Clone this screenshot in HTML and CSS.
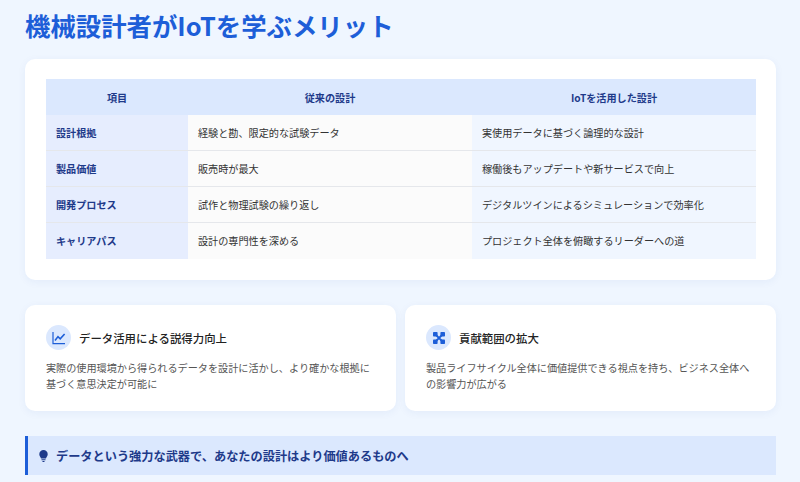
FILE: index.html
```html
<!DOCTYPE html>
<html lang="ja">
<head>
<meta charset="utf-8">
<title>機械設計者がIoTを学ぶメリット</title>
<link rel="stylesheet" href="styles.css">
</head>
<body>
<main class="page">
  <h1 class="title">機械設計者がIoTを学ぶメリット</h1>
  <section class="table-card">
    <table class="compare">
      <thead>
        <tr><th class="col-a">項目</th><th class="col-b">従来の設計</th><th class="col-c">IoTを活用した設計</th></tr>
      </thead>
      <tbody>
        <tr><th>設計根拠</th><td class="old">経験と勘、限定的な試験データ</td><td class="new">実使用データに基づく論理的な設計</td></tr>
        <tr><th>製品価値</th><td class="old">販売時が最大</td><td class="new">稼働後もアップデートや新サービスで向上</td></tr>
        <tr><th>開発プロセス</th><td class="old">試作と物理試験の繰り返し</td><td class="new">デジタルツインによるシミュレーションで効率化</td></tr>
        <tr><th>キャリアパス</th><td class="old">設計の専門性を深める</td><td class="new">プロジェクト全体を俯瞰するリーダーへの道</td></tr>
      </tbody>
    </table>
  </section>
  <section class="benefits">
    <article class="benefit">
      <header class="benefit-head">
        <span class="icon-circle">
          <svg class="icon" viewBox="0 0 14 14" width="14" height="14"><path d="M1 1V12.6H13" fill="none" stroke="currentColor" stroke-width="1.2"/><path d="M3 9.6L6 5.6 8.2 7.8 12.6 3" fill="none" stroke="currentColor" stroke-width="1.6"/></svg>
        </span>
        <h2 class="benefit-title">データ活用による説得力向上</h2>
      </header>
      <p class="benefit-text">実際の使用環境から得られるデータを設計に活かし、より確かな根拠に基づく意思決定が可能に</p>
    </article>
    <article class="benefit">
      <header class="benefit-head">
        <span class="icon-circle">
          <svg class="icon" viewBox="0 0 14 14" width="14" height="14"><g fill="currentColor"><rect x="1" y="1" width="4.6" height="4.6" rx=".8"/><rect x="8.4" y="1" width="4.6" height="4.6" rx=".8"/><rect x="1" y="8.4" width="4.6" height="4.6" rx=".8"/><rect x="8.4" y="8.4" width="4.6" height="4.6" rx=".8"/></g><path d="M4 4L10 10M10 4L4 10" stroke="currentColor" stroke-width="1.8"/></svg>
        </span>
        <h2 class="benefit-title">貢献範囲の拡大</h2>
      </header>
      <p class="benefit-text">製品ライフサイクル全体に価値提供できる視点を持ち、ビジネス全体への影響力が広がる</p>
    </article>
  </section>
  <aside class="banner">
    <svg class="bulb" viewBox="0 0 12 14" width="11" height="14"><path d="M6 .5A4.6 4.6 0 0 0 1.4 5.1c0 2 1.5 3 1.9 4.6h5.4c.4-1.6 1.9-2.6 1.9-4.6A4.6 4.6 0 0 0 6 .5zM3.8 10.6h4.4v1.1H3.8zM4.6 12.4h2.8L6.8 13.5H5.2z" fill="currentColor"/></svg>
    <span>データという強力な武器で、あなたの設計はより価値あるものへ</span>
  </aside>
</main>
</body>
</html>
```
FILE: styles.css
```css
* { box-sizing: border-box; }
html, body { margin: 0; height: 100%; }
body {
  background: #eff6ff;
  font-family: "Noto Sans CJK JP", "Noto Sans", sans-serif;
  color: #333;
  overflow: hidden;
}
.page { padding: 9px 24px 0 25px; }
.title {
  margin: 0 0 18px;
  font-size: 25.4px;
  line-height: 32px;
  font-weight: 700;
  color: #1d5ed8;
}
.table-card {
  background: #fff;
  border-radius: 10px;
  padding: 20px 20px 21px 21px;
  box-shadow: 0 2px 8px rgba(30, 64, 175, .06);
  margin-bottom: 25px;
}
.compare {
  width: 100%;
  border-collapse: separate;
  border-spacing: 0;
  table-layout: fixed;
  font-size: 10.15px;
}
.compare thead th {
  height: 36px;
  background: #dbe8fe;
  color: #1e3a8a;
  font-weight: 700;
  text-align: center;
  padding: 0;
}
.col-a { width: 20%; }
.col-b, .col-c { width: 40%; }
.compare tbody th {
  background: #e6edfe;
  color: #1e3a8a;
  font-weight: 700;
  text-align: left;
  padding: 0 10px;
  height: 36px;
  border-bottom: 1px solid #e5e7eb;
}
.compare td {
  padding: 0 10px;
  height: 36px;
  border-bottom: 1px solid #e5e7eb;
}
.compare tbody tr:last-child th,
.compare tbody tr:last-child td { border-bottom: 0; padding-bottom: 1px; }
.old { background: #fbfbfb; }
.new { background: #f0f6ff; }
.benefits {
  display: grid;
  grid-template-columns: 1fr 1fr;
  gap: 9px;
  margin-bottom: 25px;
}
.benefit {
  background: #fff;
  border-radius: 10px;
  padding: 20px 21px;
  height: 106px;
  box-shadow: 0 2px 8px rgba(30, 64, 175, .06);
}
.benefit-head { display: flex; align-items: center; gap: 8px; margin-bottom: 10px; }
.icon-circle {
  width: 25px;
  height: 25px;
  border-radius: 50%;
  background: #dbe8fe;
  color: #1d5ed8;
  display: flex;
  align-items: center;
  justify-content: center;
}
.benefit-title { margin: 0; font-size: 11.42px; line-height: 16px; font-weight: 500; color: #222; }
.benefit-text { margin: 0; font-size: 10.13px; line-height: 15.5px; color: #555; }
.banner {
  height: 39px;
  background: #dbe8fe;
  border-left: 3px solid #1d5ed8;
  display: flex;
  align-items: center;
  gap: 7px;
  padding-left: 10px;
  font-size: 12.2px;
  font-weight: 700;
  color: #1e3a8a;
}
.bulb { color: #1e3a8a; }
```
